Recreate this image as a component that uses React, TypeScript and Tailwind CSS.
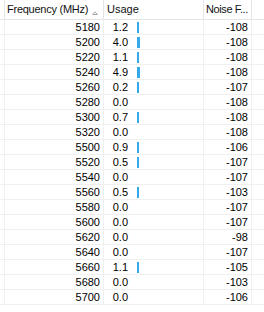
import React from "react";

const rows: [number, string, number][] = [
  [5180, "1.2", -108],
  [5200, "4.0", -108],
  [5220, "1.1", -108],
  [5240, "4.9", -108],
  [5260, "0.2", -107],
  [5280, "0.0", -108],
  [5300, "0.7", -108],
  [5320, "0.0", -108],
  [5500, "0.9", -106],
  [5520, "0.5", -107],
  [5540, "0.0", -107],
  [5560, "0.5", -103],
  [5580, "0.0", -107],
  [5600, "0.0", -107],
  [5620, "0.0", -98],
  [5640, "0.0", -107],
  [5660, "1.1", -105],
  [5680, "0.0", -103],
  [5700, "0.0", -106],
];

const cols = "grid grid-cols-[5px_99px_100px_48px_12px]";

export default function App() {
  return (
    <div
      className="w-[264px] h-[312px] bg-white overflow-hidden text-[11px] text-black"
      style={{ fontFamily: '"Liberation Sans", Arial, sans-serif' }}
    >
      <div className={`${cols} h-[20px] border-b border-[#e5e5e5] bg-white`}>
        <div className="border-r border-[#e5e5e5]" />
        <div className="border-r border-[#e5e5e5] flex items-center pl-[2px] text-[#111] relative">
          <span className="tracking-[-0.25px] whitespace-nowrap">Frequency (MHz)</span>
          <svg className="absolute left-[87px] top-[11px]" width="6" height="4" viewBox="0 0 6 4">
            <path d="M0.5 3.5 L3 0.8 L5.5 3.5 Z" fill="none" stroke="#a8a8a8" strokeWidth="1" />
          </svg>
        </div>
        <div className="border-r border-[#e5e5e5] flex items-center pl-[3px] text-[#111]">Usage</div>
        <div className="border-r border-[#e5e5e5] flex items-center pl-[2px] text-[#111] whitespace-nowrap tracking-[-0.4px]">
          <span>Noise F...</span>
        </div>
        <div />
      </div>
      {rows.map(([f, u, n]) => {
        const v = parseFloat(u);
        const w = v <= 0 ? 0 : v >= 4 ? 3 : 2;
        return (
          <div key={f} className={`${cols} h-[15px] border-b border-[#f0f0f0]`}>
            <div className="border-r border-[#f0f0f0]" />
            <div className="border-r border-[#f0f0f0] text-right pr-[3px] leading-[14px]">{f}</div>
            <div className="border-r border-[#f0f0f0] flex items-start leading-[14px]">
              <span className="w-[24px] text-right">{u}</span>
              {w > 0 && (
                <span className="ml-[9px] mt-[2px] h-[11px] bg-[#35a9e9]" style={{ width: w }} />
              )}
            </div>
            <div className="border-r border-[#f0f0f0] text-right pr-[3px] leading-[14px]">{n}</div>
            <div />
          </div>
        );
      })}
    </div>
  );
}
